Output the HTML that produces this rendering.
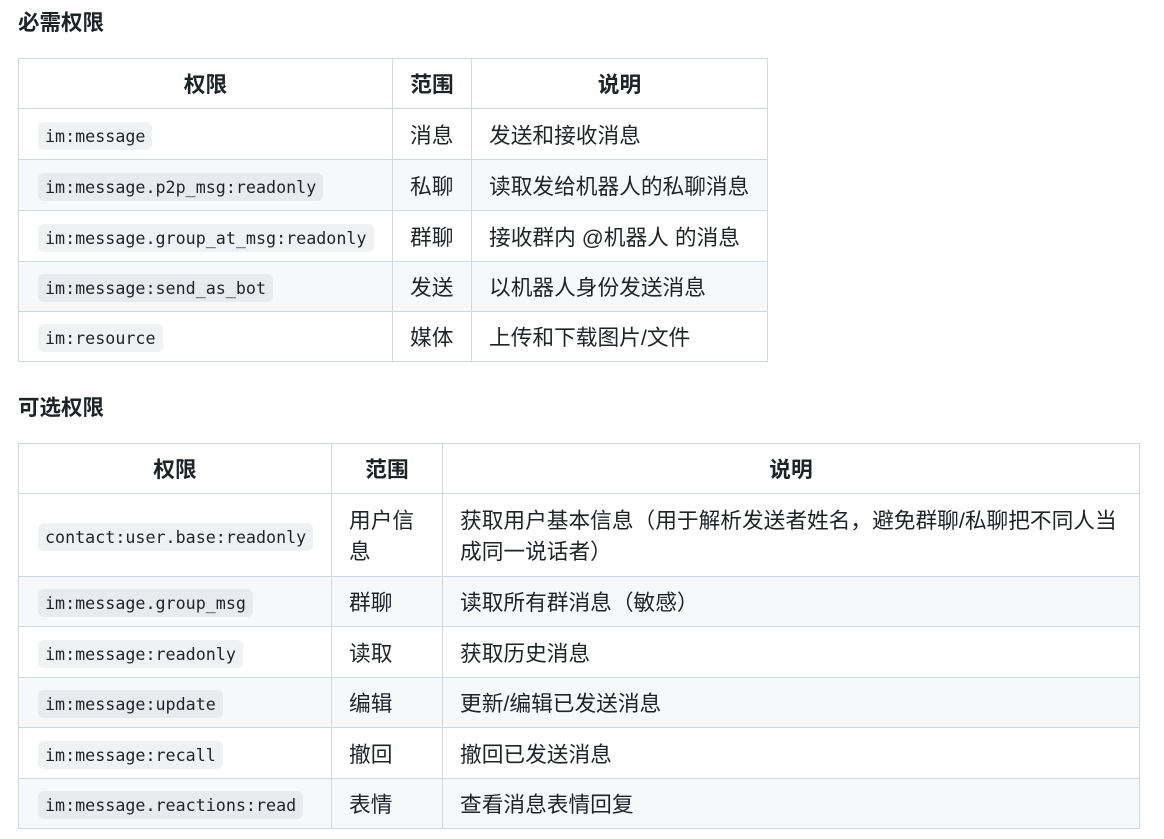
<!DOCTYPE html>
<html><head><meta charset="utf-8"><style>
body{margin:0;background:#fff;color:#1f2328;font-family:"Liberation Sans","Noto Sans CJK SC",sans-serif;font-size:21.7px;width:1164px;height:839px;overflow:hidden;position:relative}
h3{position:absolute;left:18px;margin:0;font-size:21.5px;font-weight:bold;line-height:30px}
table{position:absolute;left:18px;border-collapse:collapse;table-layout:fixed}
td,th{border:1px solid #d1d9e0;padding:2px 17px 0;line-height:31px;text-align:left;vertical-align:middle}
th{font-weight:bold;text-align:center}
tr:nth-child(odd) td{background:#f6f8fa}
code{font-family:"DejaVu Sans Mono","Liberation Mono",monospace;font-size:16.7px;background:#eff1f3;border-radius:6px;padding:4px 7px;margin-left:2px}
tr:nth-child(odd) code{background:#e8eaed}
</style></head><body>
<h3 style="top:8px">必需权限</h3>
<table style="top:58px;width:749px">
<colgroup><col style="width:374px"><col style="width:79px"><col style="width:296px"></colgroup>
<tr style="height:50px"><th>权限</th><th>范围</th><th>说明</th></tr>
<tr style="height:51px"><td><code>im:message</code></td><td>消息</td><td>发送和接收消息</td></tr>
<tr style="height:51px"><td><code>im:message.p2p_msg:readonly</code></td><td>私聊</td><td>读取发给机器人的私聊消息</td></tr>
<tr style="height:51px"><td><code>im:message.group_at_msg:readonly</code></td><td>群聊</td><td>接收群内 @机器人 的消息</td></tr>
<tr style="height:50px"><td><code>im:message:send_as_bot</code></td><td>发送</td><td>以机器人身份发送消息</td></tr>
<tr style="height:50px"><td><code>im:resource</code></td><td>媒体</td><td>上传和下载图片/文件</td></tr>
</table>
<h3 style="top:393px">可选权限</h3>
<table style="top:443px;width:1121px">
<colgroup><col style="width:313px"><col style="width:111px"><col style="width:697px"></colgroup>
<tr style="height:50px"><th>权限</th><th>范围</th><th>说明</th></tr>
<tr style="height:83px"><td><code>contact:user.base:readonly</code></td><td>用户信息</td><td>获取用户基本信息（用于解析发送者姓名，避免群聊/私聊把不同人当成同一说话者）</td></tr>
<tr style="height:50px"><td><code>im:message.group_msg</code></td><td>群聊</td><td>读取所有群消息（敏感）</td></tr>
<tr style="height:51px"><td><code>im:message:readonly</code></td><td>读取</td><td>获取历史消息</td></tr>
<tr style="height:50px"><td><code>im:message:update</code></td><td>编辑</td><td>更新/编辑已发送消息</td></tr>
<tr style="height:51px"><td><code>im:message:recall</code></td><td>撤回</td><td>撤回已发送消息</td></tr>
<tr style="height:50px"><td><code>im:message.reactions:read</code></td><td>表情</td><td>查看消息表情回复</td></tr>
</table>
</body></html>
